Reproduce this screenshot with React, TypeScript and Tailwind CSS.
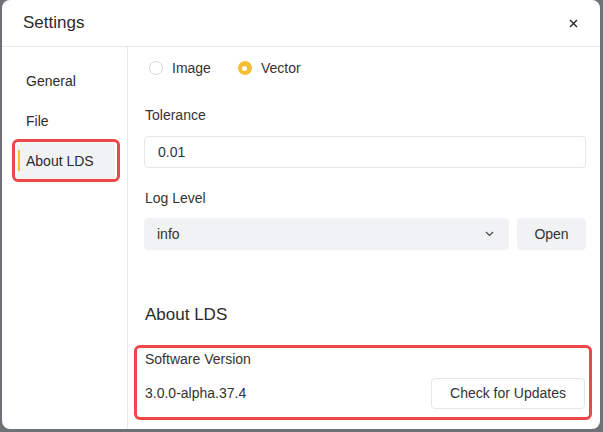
import { useState } from "react";

// Settings dialog: side navigation, export options and the "About" panel

const font = { fontFamily: '"Liberation Sans", Arial, sans-serif' };

const navItems = ["General", "File", "About LDS"];

function Radio({ checked, label }: { checked: boolean; label: string }) {
  return (
    <label className="flex items-center gap-[9px] cursor-pointer">
      {checked ? (
        <span className="w-[14px] h-[14px] rounded-full bg-[#f6bf33] flex items-center justify-center">
          <span className="w-[5px] h-[5px] rounded-full bg-white"></span>
        </span>
      ) : (
        <span className="w-[14px] h-[14px] rounded-full border border-[#d6d8dc] bg-white"></span>
      )}
      <span className="text-[14px] text-[#333]">{label}</span>
    </label>
  );
}

export default function App() {
  const [active] = useState("About LDS");

  return (
    <div className="w-[603px] h-[432px] bg-[#6e7175] overflow-hidden" style={font}>
      <div className="ml-[2px] w-[598px] h-[429px] bg-white rounded-lg flex flex-col text-[#333]">
        {/* header */}
        <div className="h-[47px] shrink-0 border-b border-[#e6e7ea] flex items-center justify-between pl-[21px] pr-[20px]">
          <h1 className="text-[17px] text-[#2b2b2b]">Settings</h1>
          <button className="w-[14px] h-[14px] flex items-center justify-center">
            <svg width="9" height="9" viewBox="0 0 9 9">
              <path d="M1 1L8 8M8 1L1 8" stroke="#222" strokeWidth="1.4" />
            </svg>
          </button>
        </div>

        <div className="flex flex-1 min-h-0">
          {/* sidebar */}
          <div className="w-[126px] shrink-0 border-r border-[#e6e7ea] pt-[16px] pl-[15px] pr-[12px] flex flex-col gap-[4px]">
            {navItems.map((item) => {
              const isActive = item === active;
              return (
                <div
                  key={item}
                  className={
                    isActive
                      ? "relative h-[36px] rounded-[3px] bg-[#f1f2f4] flex items-center pl-[9px] text-[14px] text-[#2b2b2b]"
                      : "relative h-[36px] flex items-center pl-[9px] text-[14px] text-[#2b2b2b]"
                  }
                >
                  {isActive && (
                    <>
                      <span className="absolute left-[1px] top-[7px] w-[2px] h-[21px] bg-[#f6bf33]"></span>
                      <span className="absolute -left-[5px] -right-[5px] -top-[4px] -bottom-[3px] border-[3px] border-[#ef4747] rounded-[6px]"></span>
                    </>
                  )}
                  {item}
                </div>
              );
            })}
          </div>

          {/* content */}
          <div className="flex-1 pl-[16px] pr-[14px] pt-[13px]">
            <div className="flex items-center gap-[27px] pl-[5px] h-[16px]">
              <Radio checked={false} label="Image" />
              <Radio checked={true} label="Vector" />
            </div>

            <p className="mt-[31px] text-[14px] leading-[16px] ml-[1px]">Tolerance</p>
            <div className="mt-[13px] h-[32px] border border-[#e5e6e9] rounded-[4px] flex items-center pl-[13px] text-[14px]">
              0.01
            </div>

            <p className="mt-[22px] text-[14px] leading-[16px] ml-[1px]">Log Level</p>
            <div className="mt-[12px] flex gap-[8px]">
              <div className="flex-1 h-[32px] bg-[#f1f2f4] rounded-[4px] flex items-center justify-between pl-[13px] pr-[15px] text-[14px]">
                <span>info</span>
                <svg width="9" height="6" viewBox="0 0 9 6">
                  <path d="M1 1L4.5 4.5L8 1" stroke="#444" strokeWidth="1.1" fill="none" />
                </svg>
              </div>
              <button className="w-[69px] h-[32px] bg-[#f1f2f4] rounded-[4px] text-[14px] text-[#333]">
                Open
              </button>
            </div>

            <h2 className="mt-[55px] text-[17px] leading-[20px] text-[#2b2b2b] ml-[1px]">About LDS</h2>

            {/* version card */}
            <div className="relative mt-[20px] -ml-[10px] -mr-[6px] border-[3px] border-[#ef4747] rounded-[6px] h-[75px] pl-[8px] pr-[4px] pt-[3px]">
              <p className="text-[14px] leading-[16px]">Software Version</p>
              <div className="mt-[11px] flex items-center justify-between">
                <span className="text-[14px]">3.0.0-alpha.37.4</span>
                <button className="h-[31px] px-[18px] border border-[#e5e6e9] rounded-[4px] bg-white text-[14px] text-[#333]">
                  Check for Updates
                </button>
              </div>
            </div>
          </div>
        </div>
      </div>
    </div>
  );
}
